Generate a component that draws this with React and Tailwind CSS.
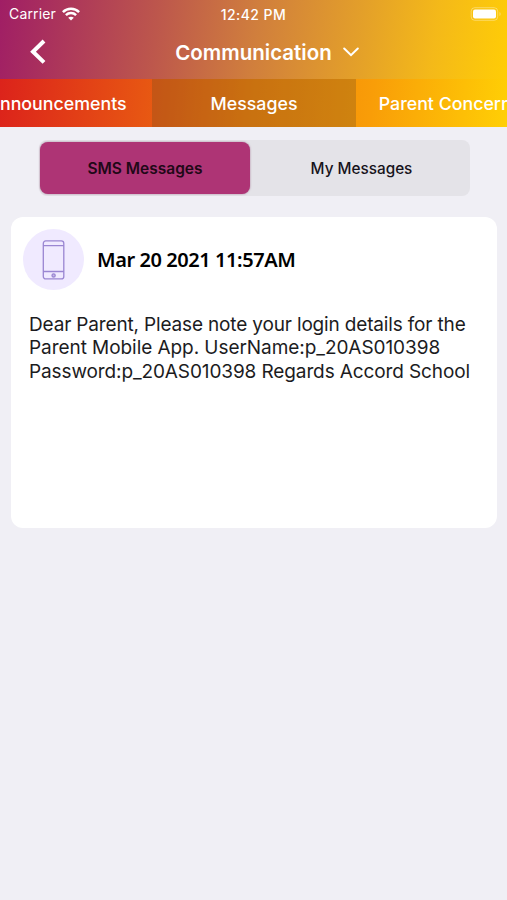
const tabs = [
  { label: 'Announcements', className: 'w-[203px] -ml-[51px] pl-[13px]' },
  { label: 'Messages', className: 'w-[204px] bg-[#705020]/30' },
  { label: 'Parent Concerns', className: 'w-[203px] pr-[15px]' },
]

function WifiIcon() {
  return (
    <svg className="w-[18px] h-[14px]" viewBox="0 0 18 14" fill="none" stroke="white" strokeWidth="2.5">
      <path d="M0.9 5.1C5.4 0.7 12.6 0.7 17.1 5.1" />
      <path d="M3.9 8.2C6.8 5.4 11.2 5.4 14.1 8.2" />
      <path d="M9 13.6L6.2 10.8C7.8 9.4 10.2 9.4 11.8 10.8Z" fill="white" stroke="none" />
    </svg>
  )
}

function StatusBar() {
  return (
    <div className="grid grid-cols-3 items-center h-[27px] pl-[9px] pr-1">
      <div className="flex items-center gap-[6px]">
        <span className="text-[14px] tracking-[0.15px]">Carrier</span>
        <WifiIcon />
      </div>
      <span className="pt-px pr-[5px] text-center text-[14px] tracking-[0.45px] font-medium whitespace-nowrap">
        12:42 PM
      </span>
      <svg className="justify-self-end w-[34px] h-[14px]" viewBox="0 0 34 14">
        <rect x="2.2" y="0.7" width="26.5" height="12.6" rx="3.5" fill="none" stroke="white" strokeOpacity="0.35" />
        <rect x="4" y="2.5" width="23" height="9" rx="2" fill="white" />
        <path d="M30.5 5V9C32 8.5 32 5.5 30.5 5Z" fill="white" fillOpacity="0.4" />
      </svg>
    </div>
  )
}

function PhoneIcon() {
  return (
    <div className="flex items-center justify-center w-[61px] h-[61px] rounded-full bg-[#f0eaff]">
      <svg className="w-6 h-10" viewBox="0 0 24 40" fill="none" stroke="#9a86d2" strokeWidth="1.3">
        <rect x="1.3" y="0.9" width="20.5" height="38" rx="2.5" />
        <path d="M1.3 5.6H21.8M1.3 31.5H21.8" />
        <circle cx="11.6" cy="35.4" r="1.6" fill="#9a86d2" fillOpacity="0.5" />
      </svg>
    </div>
  )
}

export default function App() {
  return (
    <div className="w-full h-screen overflow-hidden bg-[#f0eff5] font-['Inter',sans-serif]">
      <header className="text-white">
        <div className="h-[79px] bg-[linear-gradient(98deg,#a01e65_0%,#bd574c_31%,#d07e3d_50%,#e39f2a_70%,#f4b919_85%,#ffcd06_100%)]">
          <StatusBar />
          <div className="grid grid-cols-[1fr_auto_1fr] items-center h-[50px]">
            <svg className="ml-[29px] w-[18px] h-[26px]" viewBox="0 0 18 26" fill="none" stroke="white" strokeWidth="4">
              <path d="M15 2L4 12.7L15 23.4" />
            </svg>
            <h1 className="pt-[2px] text-[20.5px] font-semibold">Communication</h1>
            <svg className="ml-[11px] w-4 h-[10px]" viewBox="0 0 16 10" fill="none" stroke="white" strokeWidth="2" strokeLinecap="round">
              <path d="M1.2 1.5L8 8.2L14.8 1.5" />
            </svg>
          </div>
        </div>
        <nav className="flex h-12 overflow-hidden bg-[linear-gradient(95deg,#dc231b_0%,#e85a12_31%,#f08109_50%,#f99d08_73%,#ffcf05_100%)]">
          {tabs.map(tab => (
            <button
              key={tab.label}
              className={`flex-shrink-0 h-full pt-[2px] text-[17.8px] font-medium whitespace-nowrap ${tab.className}`}
            >
              {tab.label}
            </button>
          ))}
        </nav>
      </header>

      <main className="pt-[13px]">
        <div className="flex ml-[39px] w-[431px] h-14 rounded-lg bg-[#e4e3e8] text-[15.3px] font-medium text-[#17131b]">
          <button className="ml-px mt-[2px] pt-[2px] w-[210px] h-[52px] rounded-lg bg-[#ae3475] text-[#210817] text-[15.5px] font-semibold shadow-[0_0_2px_rgba(120,40,90,0.6)]">
            SMS Messages
          </button>
          <button className="flex-1 pt-[2px] pl-[3px]">My Messages</button>
        </div>

        <article className="mt-[21px] ml-[11px] w-[486px] h-[311px] rounded-xl bg-white pt-3 pl-3 text-black">
          <div className="flex items-center gap-[13px]">
            <PhoneIcon />
            <h2 className="font-['Noto_Sans',sans-serif] text-[20px] tracking-[-0.43px] font-semibold">
              Mar 20 2021 11:57AM
            </h2>
          </div>
          <p className="mt-[23px] pl-[6px] text-[19px] leading-[23.3px] text-[#1c1c1e] whitespace-nowrap">
            <span className="tracking-[-0.16px]">Dear Parent, Please note your login details for the</span>
            <br />
            <span className="tracking-[-0.06px]">Parent Mobile App. UserName:p_20AS010398</span>
            <br />
            <span className="tracking-[-0.11px]">Password:p_20AS010398 Regards Accord School</span>
          </p>
        </article>
      </main>
    </div>
  )
}
